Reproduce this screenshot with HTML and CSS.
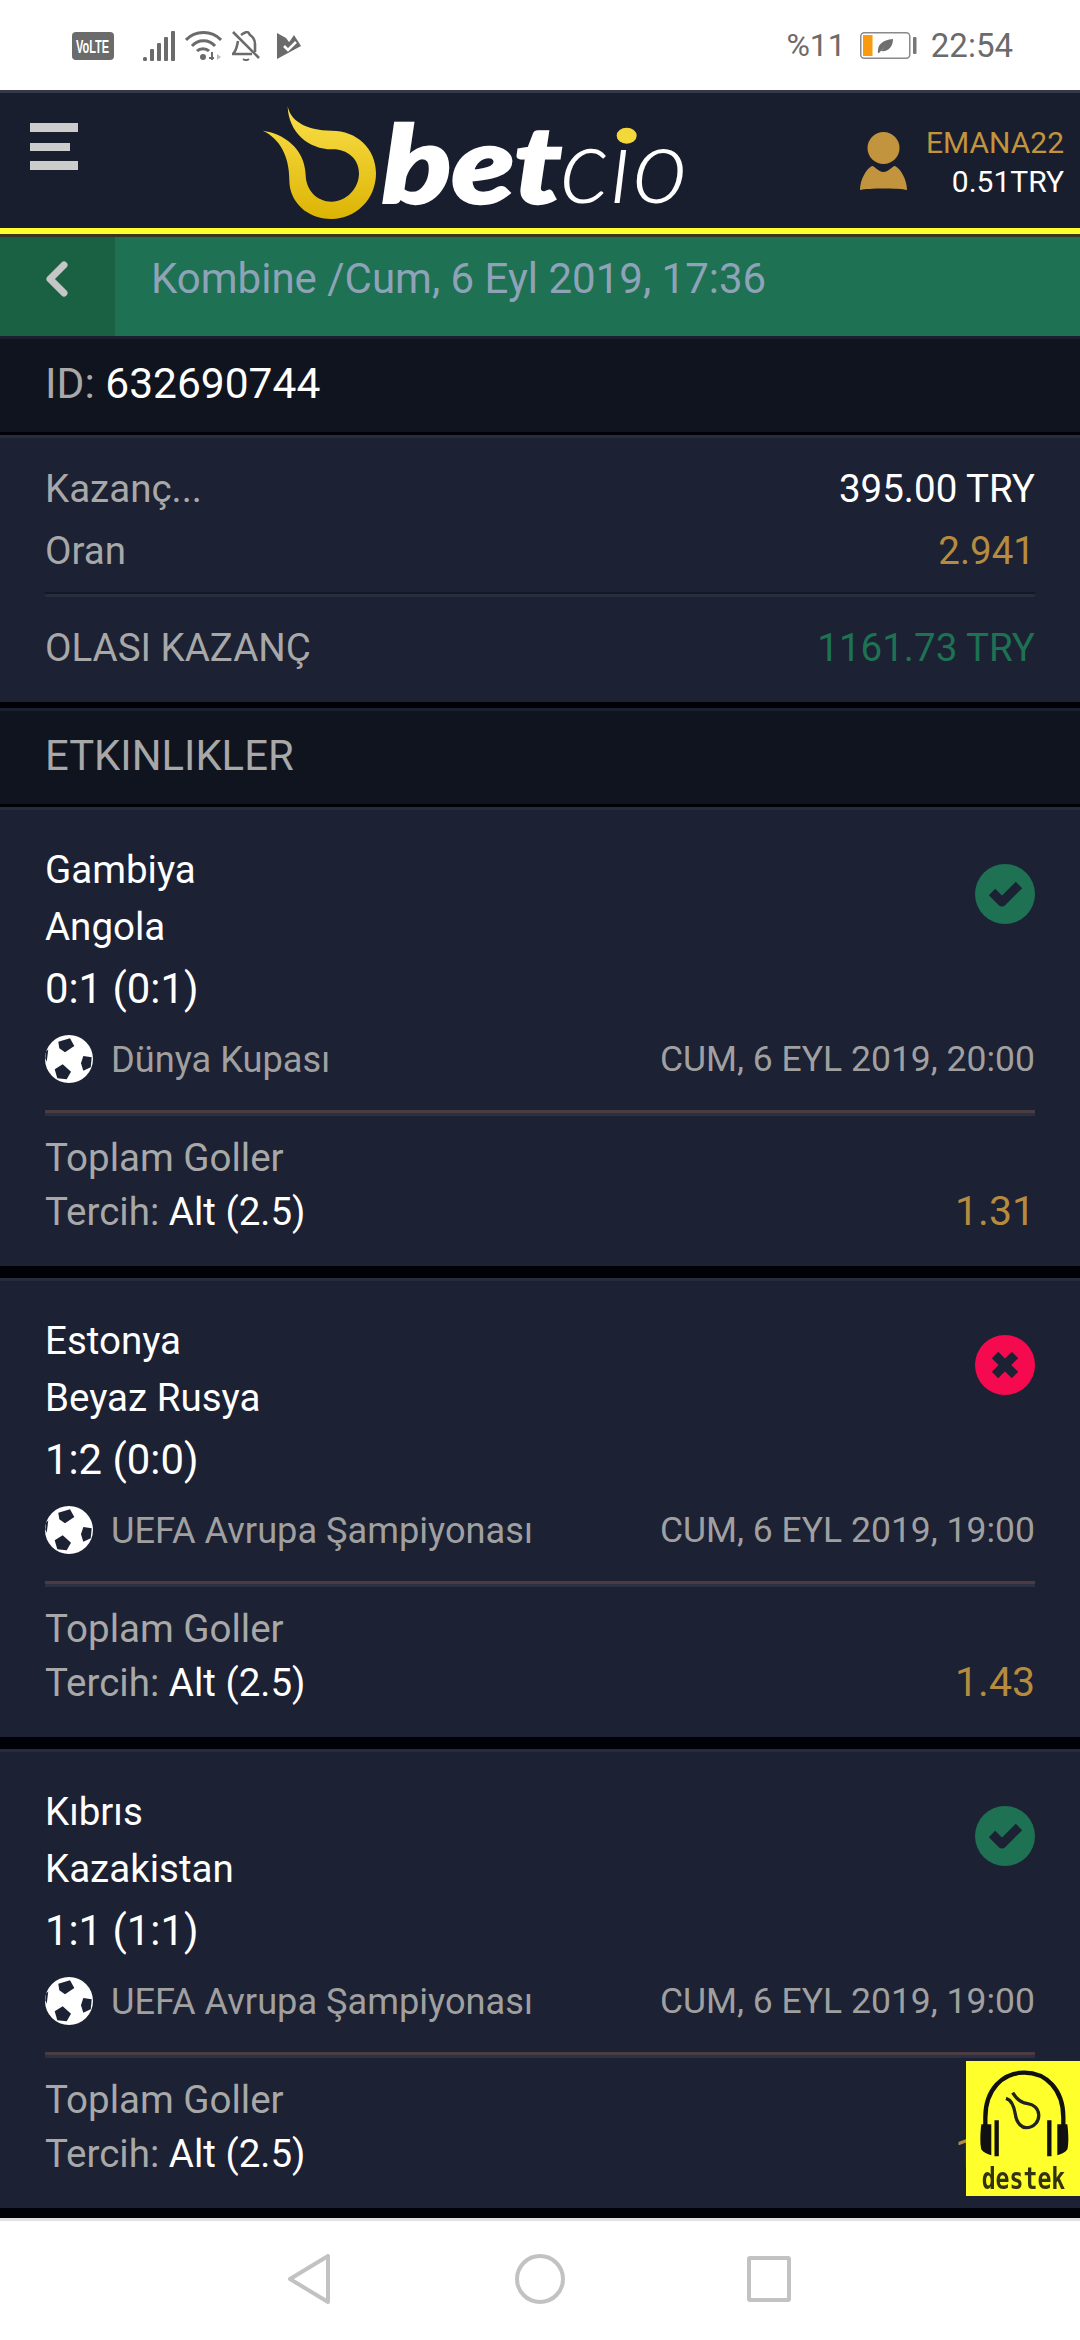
FILE: index.html
```html
<!DOCTYPE html>
<html lang="tr">
<head>
<meta charset="utf-8">
<title>Betcio</title>
<link rel="stylesheet" href="styles.css">
</head>
<body>
<div class="page">
  <div class="status">
    <div class="status-left">
      <svg class="i-volte" viewBox="0 0 42 28"><rect width="42" height="28" rx="4" fill="#6b6b6b"/><text class="volte-text" transform="translate(4 20.500) scale(1 1.600)">VoLTE</text></svg>
      <svg class="i-signal" viewBox="0 0 32 30" fill="#6b6b6b"><rect x="0" y="26" width="4" height="4" rx="1.5"/><rect x="7" y="18" width="4" height="12" rx="1"/><rect x="14" y="12" width="4" height="18" rx="1"/><rect x="21" y="6" width="4" height="24" rx="1"/><rect x="28" y="0" width="4" height="30" rx="1"/></svg>
      <svg class="i-wifi" viewBox="0 0 37 30" fill="none" stroke="#6b6b6b" stroke-width="3"><path d="M1 9C10 -1 27 -1 36 9"/><path d="M7 15C13 8 24 8 30 15"/><path d="M12 20C15 17 21 17 24 20"/><circle cx="18" cy="26" r="3" fill="#6b6b6b" stroke="none"/><path d="M27 21v8M24 27h5" stroke-width="2"/><path d="M32 23l4 3-4 3z" fill="#bbb" stroke="none"/></svg>
      <svg class="i-bell" viewBox="0 0 28 30" fill="none" stroke="#6b6b6b" stroke-width="2.6"><path d="M1 1l26 26"/><path d="M6 10C5 14 5 19 1 23h19"/><path d="M9 4C12 2 14 1 15 1c1 0 2 1 3 3 3 2 5 5 5 9v8"/><path d="M11 28c2 1.500 4 1.500 6 0" stroke-width="2"/></svg>
      <svg class="i-flag" viewBox="0 0 24 28"><path d="M0 1l9 5 3 4 1-1 4-6 7 11L0 27z" fill="#6b6b6b"/><path d="M7 14l4 4 8-8" fill="none" stroke="#fff" stroke-width="2.600"/></svg>
    </div>
    <div class="status-right">
      <span>%11</span>
      <svg class="i-battery" viewBox="0 0 57 27"><rect x=".75" y=".75" width="49" height="25.500" rx="3.500" fill="none" stroke="#8a8a8a" stroke-width="1.500"/><rect x="3" y="3" width="9.500" height="21" fill="#f99a0f"/><rect x="53" y="5" width="3.500" height="17" rx="1" fill="#777"/><path d="M18 21C17 13 22 8 33 7c0 8-5 13-12 12l5-6-7 8z" fill="#6e6e6e"/></svg>
      <span class="clock">22:54</span>
    </div>
  </div>

  <header class="header">
    <div class="burger"><span></span><span class="short"></span><span></span></div>
    <svg class="logo" viewBox="0 9 1380 405">
      <defs><linearGradient id="flame" x1="0" y1="0" x2="0" y2="1"><stop offset="0" stop-color="#fbe04a"/><stop offset="1" stop-color="#dcb404"/></linearGradient></defs>
      <path fill="url(#flame)" d="M143 48C150 90 195 122 275 122C350 122 408 175 408 250C408 330 345 387 275 387C200 387 148 335 148 270C148 200 120 145 68 122C130 130 195 175 197 255C198 300 230 335 275 335C320 335 357 295 357 250C357 205 320 178 280 178C210 180 145 130 143 48Z"/>
      <text class="logo-bet" x="425" y="340" textLength="540" lengthAdjust="spacingAndGlyphs">bet</text>
      <text class="logo-cio" x="960" y="340" textLength="385" lengthAdjust="spacingAndGlyphs">cıo</text>
      <ellipse cx="1160" cy="137" rx="30" ry="24" fill="#f3d83a"/>
    </svg>
    <div class="user">
      <svg class="i-user" viewBox="0 0 47 60" fill="#c2943e"><circle cx="23.500" cy="16" r="16"/><path d="M12 34c3 0 6 6 11.500 6S32 34 35 34c6 3 12 14 12 24-8-2-39-2-47 0 0-10 6-21 12-24z"/></svg>
      <div class="user-text">
        <div class="user-name">EMANA22</div>
        <div class="user-bal">0.51TRY</div>
      </div>
    </div>
  </header>

  <div class="subhead">
    <div class="back"><svg class="i-back" viewBox="0 0 22 36" fill="none" stroke="#c6c6c6" stroke-width="7" stroke-linecap="round" stroke-linejoin="round"><path d="M18 4L4 18l14 14"/></svg></div>
    <div class="subhead-title">Kombine /Cum, 6 Eyl 2019, 17:36</div>
  </div>

  <main class="main">
    <section class="band band-id"><span class="muted">ID:</span> <span class="white">632690744</span></section>

    <section class="summary">
      <div class="row"><span class="muted">Kazanç...</span><span class="white">395.00 TRY</span></div>
      <div class="row"><span class="muted">Oran</span><span class="gold">2.941</span></div>
      <div class="rule"></div>
      <div class="row row-total"><span class="muted">OLASI KAZANÇ</span><span class="green">1161.73 TRY</span></div>
    </section>

    <section class="band band-title muted">ETKINLIKLER</section>

    <article class="card">
      <div class="top">
        <div>
          <div class="team">Gambiya</div>
          <div class="team">Angola</div>
          <div class="score">0:1 (0:1)</div>
        </div>
        <svg class="result" viewBox="0 0 60 60"><circle cx="30" cy="30" r="30" fill="#1e7152"/><path d="M17 28l10 10 17-17" fill="none" stroke="#1c2133" stroke-width="9" stroke-linejoin="round"/></svg>
      </div>
      <div class="meta">
        <div class="league">
          <svg class="ball" viewBox="0 0 48 48"><circle cx="24" cy="24" r="24" fill="#fff"/><g fill="#1c2133"><path d="M13.300 6.700L25 3.300l4.300 7.700-9.300 6.300-5.700-4z"/><path d="M38.300 21l8.400 1.300-1 10-7.400 3.400-2.300-7.400z"/><path d="M17.700 29.300l8.300 7.400-4.300 7.600-9.400-1-2.600-9z"/><path d="M3.300 14.300L1.700 26.700.3 23.300 1 16.700z"/></g></svg>
          <span>Dünya Kupası</span>
        </div>
        <span class="date">CUM, 6 EYL 2019, 20:00</span>
      </div>
      <div class="rule rule-warm"></div>
      <div class="market">Toplam Goller</div>
      <div class="pick"><span><span class="muted">Tercih:</span> <span class="white">Alt (2.5)</span></span><span class="odds">1.31</span></div>
    </article>

    <article class="card">
      <div class="top">
        <div>
          <div class="team">Estonya</div>
          <div class="team">Beyaz Rusya</div>
          <div class="score">1:2 (0:0)</div>
        </div>
        <svg class="result" viewBox="0 0 60 60"><circle cx="30" cy="30" r="30" fill="#f50a50"/><path d="M20 20l20 20M40 20L20 40" fill="none" stroke="#1c2133" stroke-width="9"/></svg>
      </div>
      <div class="meta">
        <div class="league">
          <svg class="ball" viewBox="0 0 48 48"><circle cx="24" cy="24" r="24" fill="#fff"/><g fill="#1c2133"><path d="M13.300 6.700L25 3.300l4.300 7.700-9.300 6.300-5.700-4z"/><path d="M38.300 21l8.400 1.300-1 10-7.400 3.400-2.300-7.400z"/><path d="M17.700 29.300l8.300 7.400-4.300 7.600-9.400-1-2.600-9z"/><path d="M3.300 14.300L1.700 26.700.3 23.300 1 16.700z"/></g></svg>
          <span>UEFA Avrupa Şampiyonası</span>
        </div>
        <span class="date">CUM, 6 EYL 2019, 19:00</span>
      </div>
      <div class="rule rule-warm"></div>
      <div class="market">Toplam Goller</div>
      <div class="pick"><span><span class="muted">Tercih:</span> <span class="white">Alt (2.5)</span></span><span class="odds">1.43</span></div>
    </article>

    <article class="card">
      <div class="top">
        <div>
          <div class="team">Kıbrıs</div>
          <div class="team">Kazakistan</div>
          <div class="score">1:1 (1:1)</div>
        </div>
        <svg class="result" viewBox="0 0 60 60"><circle cx="30" cy="30" r="30" fill="#1e7152"/><path d="M17 28l10 10 17-17" fill="none" stroke="#1c2133" stroke-width="9" stroke-linejoin="round"/></svg>
      </div>
      <div class="meta">
        <div class="league">
          <svg class="ball" viewBox="0 0 48 48"><circle cx="24" cy="24" r="24" fill="#fff"/><g fill="#1c2133"><path d="M13.300 6.700L25 3.300l4.300 7.700-9.300 6.300-5.700-4z"/><path d="M38.300 21l8.400 1.300-1 10-7.400 3.400-2.300-7.400z"/><path d="M17.700 29.300l8.300 7.400-4.300 7.600-9.400-1-2.600-9z"/><path d="M3.300 14.300L1.700 26.700.3 23.300 1 16.700z"/></g></svg>
          <span>UEFA Avrupa Şampiyonası</span>
        </div>
        <span class="date">CUM, 6 EYL 2019, 19:00</span>
      </div>
      <div class="rule rule-warm"></div>
      <div class="market">Toplam Goller</div>
      <div class="pick"><span><span class="muted">Tercih:</span> <span class="white">Alt (2.5)</span></span><span class="odds">1.31</span></div>
    </article>
  </main>

  <nav class="nav">
    <svg class="nav-back" viewBox="0 0 42 50" fill="none" stroke="#c2c2c2" stroke-width="4" stroke-linejoin="round"><path d="M40 2v46L2 25z"/></svg>
    <svg class="nav-home" viewBox="0 0 50 50" fill="none" stroke="#c2c2c2" stroke-width="4"><circle cx="25" cy="25" r="23"/></svg>
    <svg class="nav-recent" viewBox="0 0 44 46" fill="none" stroke="#c2c2c2" stroke-width="4"><rect x="2" y="2" width="40" height="42" rx="1"/></svg>
  </nav>

  <aside class="destek">
    <svg class="destek-art" viewBox="0 0 342 405">
      <path d="M58 245V170C58 85 110 35 175 35S292 85 292 170v75" fill="none" stroke="#111" stroke-width="13"/>
      <path d="M46 190c-4 30-4 60 0 75 6 10 18 15 30 18V190z" fill="#111"/>
      <path d="M304 190c4 30 4 60 0 75-6 10-18 15-30 18V190z" fill="#111"/>
      <path d="M92 178v108M250 178v108" stroke="#111" stroke-width="13"/>
      <path d="M120 112C140 118 145 140 148 160C152 190 170 200 180 200C205 200 220 180 218 160C216 140 200 130 185 128C165 126 150 112 140 95" fill="none" stroke="#222" stroke-width="10"/>
      <text class="destek-text" transform="translate(47 385) scale(1.120 1.500)">destek</text>
    </svg>
  </aside>
</div>
</body>
</html>
```
FILE: styles.css
```css
* { box-sizing: border-box; }
html, body { margin: 0; padding: 0; }
body { font-family: Roboto, "Liberation Sans", sans-serif; background: #fff; }
.page { position: relative; width: 1080px; height: 2340px; overflow: hidden; background: #fff; }

.status { height: 90px; display: flex; align-items: center; justify-content: space-between; padding: 0 67px 0 72px; color: #6b6b6b; font-size: 32px; }
.status-left { display: flex; align-items: center; margin-top: 1px; }
.i-volte { width: 42px; height: 28px; }
.volte-text { fill: #fff; font: 700 11px "Liberation Sans", sans-serif; }
.i-signal { width: 32px; height: 30px; margin-left: 29px; }
.i-wifi { width: 37px; height: 30px; margin-left: 10px; }
.i-bell { width: 28px; height: 30px; margin-left: 10px; }
.i-flag { width: 24px; height: 28px; margin-left: 17px; }
.status-right { display: flex; align-items: center; gap: 14px; }
.clock { font-size: 33px; }
.i-battery { width: 57px; height: 27px; }

.header { height: 138px; border-top: 3px solid #33384a; background: #181e2e; display: flex; align-items: center; padding: 0 16px 0 30px; }
.burger { align-self: flex-start; margin-top: 30px; width: 48px; display: flex; flex-direction: column; gap: 10.500px; }
.burger span { display: block; height: 9px; background: #ccc; }
.burger .short { width: 40px; height: 8px; }
.logo { width: 460px; height: 135px; margin-left: 162px; flex: none; }
.logo-bet { fill: #fff; stroke: #fff; stroke-width: 7px; font: italic 900 320px Lato, "Liberation Sans", sans-serif; }
.logo-cio { fill: #fff; font: italic 300 320px Lato, Roboto, sans-serif; }
.user { margin-left: auto; display: flex; align-items: center; margin-top: 3px; }
.i-user { width: 47px; height: 60px; margin-right: 19px; }
.user-text { text-align: right; font-size: 30px; line-height: 39px; }
.user-name { color: #c2943e; }
.user-bal { color: #fff; }

.subhead { height: 108px; background: #1e7152; border-top: 6px solid #ffff2b; display: flex; align-items: stretch; box-shadow: inset 0 3px 0 #3a3520; }
.back { width: 115px; background: #1a6144; display: flex; align-items: center; padding: 0 0 16px 46px; margin-top: 3px; }
.i-back { width: 22px; height: 36px; }
.subhead-title { padding-left: 36px; color: #8fa3b8; font-size: 42px; line-height: 89px; }

.main { background: #000208; height: 1882px; }
.muted { color: #a8a8a8; }
.white { color: #fff; }
.gold { color: #b58b3f; }
.green { color: #1e7152; }

.band { background: #10141f; border-top: 3px solid #1b2030; padding: 0 45px; font-size: 41.800px; }
.band-id { height: 96px; line-height: 89px; font-size: 42.500px; }
.band-title { height: 96px; line-height: 89px; margin-top: 6px; }

.summary { height: 267px; margin-top: 3px; border-top: 3px solid #262c3e; background: #1c2133; padding: 20px 45px 0; font-size: 38.500px; }
.row { display: flex; justify-content: space-between; line-height: 62px; }
.rule { height: 5px; margin-top: 10px; background: #272d3f; border-top: 2px solid #141825; }
.row-total { margin-top: 20px; }

.card { height: 459px; margin-top: 12px; border-top: 3px solid #262c3e; background: #1c2133; padding: 31px 45px 0; color: #fff; }
.band-title + .card { margin-top: 3px; }
.top { display: flex; justify-content: space-between; align-items: flex-start; }
.team { font-size: 38.500px; line-height: 57px; }
.score { font-size: 41.800px; line-height: 62px; margin-top: 3px; }
.result { width: 60px; height: 60px; margin-top: 23px; }
.meta { display: flex; justify-content: space-between; align-items: center; height: 48px; margin-top: 15px; font-size: 35.500px; color: #a0a0a0; }
.league { display: flex; align-items: center; font-size: 36.200px; }
.ball { width: 48px; height: 48px; margin-right: 18px; }
.rule-warm { height: 6px; margin-top: 27px; background: #2b3042; border-top: 3px solid #4a3c42; }
.market { margin-top: 15px; font-size: 38.500px; line-height: 53px; color: #a8a8a8; }
.pick { display: flex; justify-content: space-between; align-items: baseline; font-size: 38.500px; line-height: 54px; }
.odds { color: #b58b3f; font-size: 41px; }

.nav { height: 122px; border-top: 3px solid #e0e0e0; background: #fff; position: relative; display: flex; align-items: center; padding: 0 0 3px 288px; }
.nav-back { width: 42px; height: 50px; }
.nav-home { width: 50px; height: 50px; margin-left: 185px; }
.nav-recent { width: 44px; height: 46px; margin-left: 182px; }

.destek { position: absolute; left: 966px; top: 2061px; width: 114px; height: 135px; background: #ffff2b; }
.destek-art { display: block; width: 114px; height: 135px; filter: blur(.5px); }
.destek-text { fill: #33330f; font: 700 62px "DejaVu Sans Mono", monospace; }
```
